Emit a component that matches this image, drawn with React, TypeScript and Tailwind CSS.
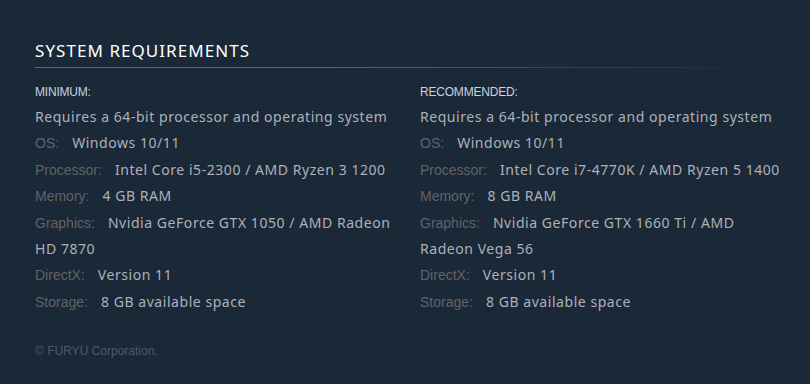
import React from "react";

type Row = { label?: string; value: string };

const minRows: Row[] = [
  { value: "Requires a 64-bit processor and operating system" },
  { label: "OS:", value: "Windows 10/11" },
  { label: "Processor:", value: "Intel Core i5-2300 / AMD Ryzen 3 1200" },
  { label: "Memory:", value: "4 GB RAM" },
  { label: "Graphics:", value: "Nvidia GeForce GTX 1050 / AMD Radeon HD 7870" },
  { label: "DirectX:", value: "Version 11" },
  { label: "Storage:", value: "8 GB available space" },
];

const recRows: Row[] = [
  { value: "Requires a 64-bit processor and operating system" },
  { label: "OS:", value: "Windows 10/11" },
  { label: "Processor:", value: "Intel Core i7-4770K / AMD Ryzen 5 1400" },
  { label: "Memory:", value: "8 GB RAM" },
  { label: "Graphics:", value: "Nvidia GeForce GTX 1660 Ti / AMD Radeon Vega 56" },
  { label: "DirectX:", value: "Version 11" },
  { label: "Storage:", value: "8 GB available space" },
];

function Column({ title, rows, width }: { title: string; rows: Row[]; width: string }) {
  return (
    <div className={`${width} shrink-0`}>
      <div className="text-[12px] uppercase text-[#c6d4df] leading-[16px] font-['Liberation_Sans',Arial,sans-serif] tracking-[-0.2px]">
        {title}
      </div>
      <ul className="mt-[4px] text-[14px] leading-[26.4px]">
        {rows.map((r, i) => (
          <li key={i} className="text-[#acb2b8]">
            {r.label && (
              <span className="text-[#626366] font-['Liberation_Sans',Arial,sans-serif] mr-[13px]">
                {r.label}
              </span>
            )}
            <span className="font-['Noto_Sans','Open_Sans',sans-serif] tracking-[0.55px]">
              {r.value}
            </span>
          </li>
        ))}
      </ul>
    </div>
  );
}

export default function App() {
  return (
    <div className="w-[810px] h-[384px] overflow-hidden bg-[#1b2838] px-[35px] pt-[40px]">
      <h2 className="text-[17px] uppercase text-white leading-[22px] tracking-[1.05px] font-['Noto_Sans','Open_Sans',sans-serif]">
        System Requirements
      </h2>
      <div className="mt-[5px] h-px w-[735px] bg-[linear-gradient(to_right,#3b6e8c_0%,#3b6e8c_40%,rgba(59,110,140,0)_100%)]" />
      <div className="mt-[16px] flex gap-[10px]">
        <Column title="Minimum:" rows={minRows} width="w-[375px]" />
        <Column title="Recommended:" rows={recRows} width="w-[366px]" />
      </div>
      <div className="mt-[27px] text-[12px] text-[#4d5a66] font-['Liberation_Sans',Arial,sans-serif]">
        © FURYU Corporation.
      </div>
    </div>
  );
}
